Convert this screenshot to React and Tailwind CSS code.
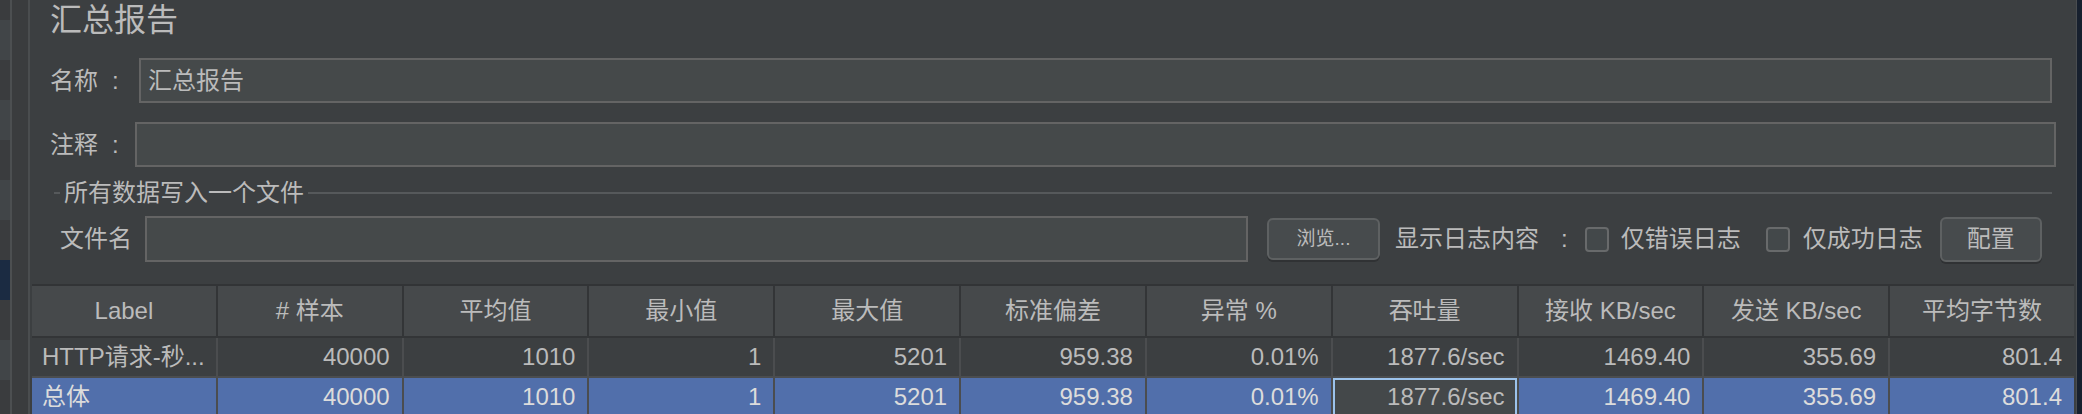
import React from "react";

const font = { fontFamily: '"Liberation Sans", "Noto Sans CJK SC", sans-serif' };

const headers = ["Label", "# 样本", "平均值", "最小值", "最大值", "标准偏差", "异常 %", "吞吐量", "接收 KB/sec", "发送 KB/sec", "平均字节数"];
const row1 = ["HTTP请求-秒...", "40000", "1010", "1", "5201", "959.38", "0.01%", "1877.6/sec", "1469.40", "355.69", "801.4"];
const row2 = ["总体", "40000", "1010", "1", "5201", "959.38", "0.01%", "1877.6/sec", "1469.40", "355.69", "801.4"];

const stripes = [
  { h: "h-[20px]", c: "bg-[#3a3c3e]" },
  { h: "h-[40px]", c: "bg-[#414548]" },
  { h: "h-[40px]", c: "bg-[#3a3c3e]" },
  { h: "h-[40px]", c: "bg-[#414548]" },
  { h: "h-[40px]", c: "bg-[#3a3c3e]" },
  { h: "h-[40px]", c: "bg-[#414548]" },
  { h: "h-[40px]", c: "bg-[#3a3c3e]" },
  { h: "h-[40px]", c: "bg-[#1b2b42]" },
  { h: "h-[40px]", c: "bg-[#3a3c3e]" },
  { h: "h-[40px]", c: "bg-[#414548]" },
  { h: "h-[34px]", c: "bg-[#3a3c3e]" },
];

function Checkbox() {
  return <div className="w-[24px] h-[25px] rounded-[4px] border-2 border-[#686a6b] bg-[#43484a] shrink-0" />;
}

export default function App() {
  return (
    <div className="flex h-[414px] w-[2082px] overflow-hidden bg-[#3c3f41] text-[#bbbbbb]" style={font}>
      <div className="w-[10px] flex flex-col shrink-0">
        {stripes.map((s, i) => (
          <div key={i} className={`${s.h} ${s.c} shrink-0`} />
        ))}
      </div>
      <div className="w-[2px] bg-[#4c4f51] shrink-0" />
      <div className="w-[16px] bg-[#3a3c3e] shrink-0" />
      <div className="w-[2px] bg-[#4a4d4f] shrink-0" />

      <div className="w-[2046px] shrink-0 flex flex-col">
        <div className="h-[40px] pl-[20px] text-[32px] leading-[40px]">汇总报告</div>

        <div className="mt-[18px] h-[45px] flex items-center">
          <div className="ml-[20px] w-[72px] text-[24px] leading-[24px] flex">
            <span>名称</span>
            <span className="ml-[14px]">:</span>
          </div>
          <div className="ml-[17px] w-[1913px] h-[45px] border-2 border-[#646464] bg-[#45494a] flex items-center pl-[7px] text-[24px]">
            汇总报告
          </div>
        </div>

        <div className="mt-[19px] h-[45px] flex items-center">
          <div className="ml-[20px] w-[72px] text-[24px] leading-[24px] flex">
            <span>注释</span>
            <span className="ml-[14px]">:</span>
          </div>
          <div className="ml-[13px] w-[1921px] h-[45px] border-2 border-[#646464] bg-[#45494a]" />
        </div>

        <div className="mt-[14px] h-[24px] flex items-center ml-[24px] mr-[24px]">
          <div className="w-[6px] h-[2px] bg-[#56595b]" />
          <div className="px-[4px] text-[24px] leading-[24px]">所有数据写入一个文件</div>
          <div className="flex-1 h-[2px] bg-[#56595b]" />
        </div>

        <div className="mt-[11px] h-[46px] flex items-center">
          <div className="ml-[30px] text-[24px] leading-[24px] w-[72px]">文件名</div>
          <div className="ml-[13px] w-[1103px] h-[46px] border-2 border-[#646464] bg-[#45494a]" />
          <div className="ml-[19px] w-[113px] h-[42px] rounded-[6px] border-2 border-[#5e6162] bg-[#474b4d] shadow-[0_2px_0_#303234] flex items-center justify-center text-[19px]">
            浏览...
          </div>
          <div className="ml-[15px] text-[24px] leading-[24px] flex">
            <span>显示日志内容</span>
            <span className="ml-[22px]">:</span>
          </div>
          <div className="ml-[17px]"><Checkbox /></div>
          <div className="ml-[12px] text-[24px] leading-[24px]">仅错误日志</div>
          <div className="ml-[25px]"><Checkbox /></div>
          <div className="ml-[13px] text-[24px] leading-[24px]">仅成功日志</div>
          <div className="ml-[17px] w-[102px] h-[45px] rounded-[6px] border-2 border-[#5e6162] bg-[#474b4d] shadow-[0_2px_0_#303234] flex items-center justify-center text-[24px]">
            配置
          </div>
        </div>

        <div className="mt-[22px] ml-[2px] w-[2042px] flex flex-col text-[24px]">
          <div className="h-[2px] bg-[#323436]" />
          <div className="grid grid-cols-11 gap-x-[2px] bg-[#333537] h-[50px]">
            {headers.map((h, i) => (
              <div key={i} className="bg-[#46494b] flex items-center justify-center">{h}</div>
            ))}
          </div>
          <div className="h-[2px] bg-[#333537]" />
          <div className="grid grid-cols-11 gap-x-[2px] bg-[#4b4d4f] h-[38px]">
            {row1.map((v, i) => (
              <div key={i} className={`bg-[#3c3f41] flex items-center ${i === 0 ? "justify-start pl-[10px]" : "justify-end pr-[12px]"} whitespace-nowrap overflow-hidden`}>
                {v}
              </div>
            ))}
          </div>
          <div className="h-[2px] bg-[#4b4d4f]" />
          <div className="grid grid-cols-11 gap-x-[2px] bg-[#4b4d4f] h-[38px]">
            {row2.map((v, i) => (
              <div
                key={i}
                className={
                  i === 7
                    ? "bg-[#44484a] border-2 border-[#9cc3ec] flex items-center justify-end pr-[10px] text-[#bbbbbb] whitespace-nowrap overflow-hidden"
                    : `bg-[#516fab] text-[#dcdcdc] flex items-center ${i === 0 ? "justify-start pl-[10px]" : "justify-end pr-[12px]"} whitespace-nowrap overflow-hidden`
                }
              >
                {v}
              </div>
            ))}
          </div>
        </div>
      </div>

      <div className="w-[1px] bg-[#4a4d50] shrink-0" />
      <div className="flex-1 bg-[#17202e]" />
    </div>
  );
}
